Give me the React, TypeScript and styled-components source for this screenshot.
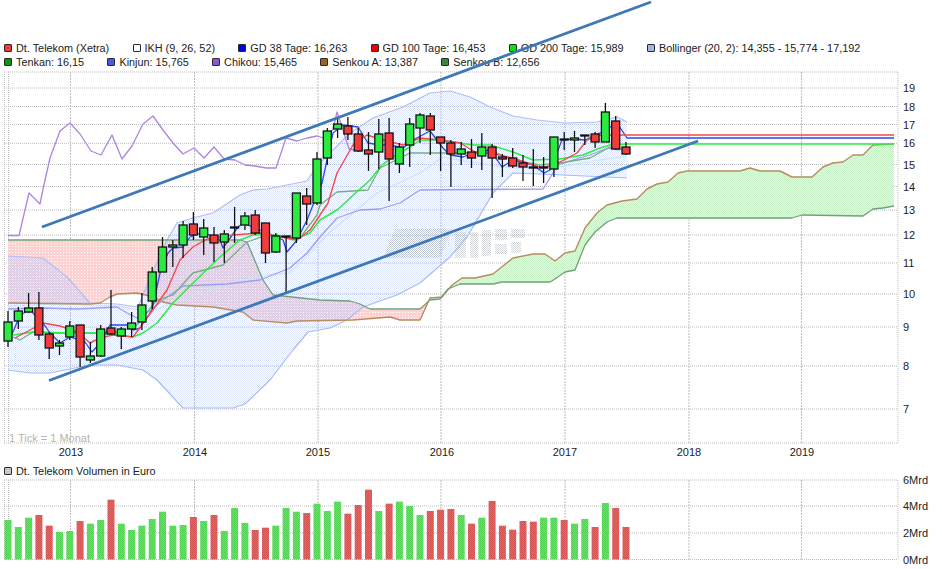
import React from "react";
import styled, { createGlobalStyle } from "styled-components";

const GlobalStyle = createGlobalStyle`
  html, body { margin: 0; padding: 0; background: #fff; }
  body { font-family: "Liberation Sans", Arial, sans-serif; color: #222; }
`;

const Page = styled.div`
  width: 942px;
  height: 569px;
  overflow: hidden;
  background: #fff;
  display: flex;
  flex-direction: column;
`;
const Legend = styled.div`
  display: flex;
  flex-direction: column;
  padding: 41px 0 0 4px;
  height: 29px;
  flex: none;
`;
const LegendRow = styled.div`
  display: flex;
  gap: 23.3px;
  height: 14px;
  align-items: center;
`;
const LegendItem = styled.div`
  display: flex;
  align-items: center;
  gap: 4px;
  font-size: 10.85px;
  line-height: 14px;
  white-space: nowrap;
`;
const Swatch = styled.span<{ $color: string }>`
  width: 6px;
  height: 6px;
  flex: none;
  border: 1px solid #2a2a2a;
  border-radius: 1px;
  background: ${(p) => p.$color};
`;
const MainChart = styled.svg`
  display: block;
  position: relative;
  flex: none;
  overflow: visible;
  width: 942px;
  height: 390px;
`;
const Caption = styled.div`
  display: flex;
  padding: 4px 0 0 4px;
  height: 14px;
  flex: none;
`;
const VolumeChart = styled.svg`
  display: block;
  flex: none;
  overflow: visible;
  width: 942px;
  height: 91px;
`;
const AxisText = styled.text`
  font-family: "Liberation Sans", Arial, sans-serif;
  font-size: 11px;
  fill: #222;
`;
const TickNote = styled.text`
  font-family: "Liberation Sans", Arial, sans-serif;
  font-size: 11px;
  fill: #b4b4ac;
`;

type P = [number, number];
const pts = (a: P[]) => a.map((p) => p.join(",")).join(" ");

const GRID_X = [70.5, 194.5, 318, 441, 565, 689, 801.5];
const PRICE_Y: [string, number][] = [
  ["19", 88], ["18", 106.5], ["17", 124.5], ["16", 143.3], ["15", 164.5], ["14", 186.5],
  ["13", 210], ["12", 235], ["11", 263], ["10", 294], ["9", 327], ["8", 366], ["7", 409],
];

// [body top, body bottom, wick top, wick bottom, colour]
const CANDLES: [number, number, number, number, "g" | "r"][] = [
  [322, 341, 311, 347, "g"], [311, 321, 307, 329, "g"], [308, 312, 293, 313, "g"], [308, 335, 292, 340, "r"],
  [334, 348, 332, 359, "r"], [343, 346, 340, 355, "g"], [326, 337, 321, 340, "g"], [325, 357, 325, 367, "r"],
  [356, 360, 342, 363, "g"], [329, 356, 325, 357, "g"], [328, 334, 290, 335, "r"], [329, 336, 327, 349, "g"],
  [323, 329, 312, 337, "g"], [305, 322, 293, 330, "g"], [272, 301, 267, 309, "g"], [247, 272, 237, 272, "g"],
  [245, 247, 240, 267, "g"], [225, 245, 221, 258, "g"], [224, 235, 212, 240, "r"], [228, 237, 219, 255, "g"],
  [235, 243, 227, 262, "r"], [234, 242, 230, 263, "g"], [227, 228, 207, 243, "g"], [216, 225, 212, 230, "g"],
  [215, 233, 210, 235, "r"], [223, 253, 223, 263, "r"], [236, 252, 233, 253, "g"], [236, 237, 236, 292, "g"],
  [193, 238, 193, 243, "g"], [196, 204, 188, 225, "r"], [159, 203, 152, 205, "g"], [131, 158, 128, 165, "g"],
  [124, 129, 118, 138, "g"], [126, 134, 117, 140, "r"], [134, 151, 128, 152, "r"], [150, 154, 132, 171, "r"],
  [134, 152, 119, 169, "g"], [133, 159, 118, 201, "r"], [147, 164, 143, 173, "g"], [124, 145, 118, 167, "g"],
  [115, 128, 113, 143, "g"], [116, 130, 113, 155, "r"], [137, 143, 137, 171, "r"], [143, 154, 140, 187, "r"],
  [149, 154, 142, 165, "g"], [152, 158, 139, 168, "r"], [147, 156, 133, 170, "g"], [147, 158, 144, 198, "r"],
  [157, 159, 154, 177, "r"], [158, 166, 148, 168, "r"], [163, 167, 155, 181, "r"], [167, 168, 149, 186, "r"],
  [167, 168, 157, 183, "r"], [137, 169, 137, 177, "g"], [139, 140, 132, 150, "r"], [138, 140, 131, 152, "g"],
  [135, 136, 135, 145, "r"], [134, 142, 132, 148, "r"], [112, 142, 103, 142, "g"], [121, 149, 116, 150, "r"],
  [147, 154, 142, 155, "r"],
];
const candleX = (i: number) => 8 + i * 10.3;

// [zoom-read top, colour]; converted to pixels below
const VOLUMES: [number, "g" | "r"][] = [
  [420, "g"], [441, "g"], [413, "g"], [405, "r"], [437, "r"], [456, "g"], [453, "g"], [423, "r"], [431, "g"], [420, "g"],
  [359, "r"], [431, "g"], [450, "g"], [437, "g"], [417, "g"], [395, "g"], [437, "g"], [435, "g"], [411, "r"], [423, "g"],
  [405, "r"], [453, "g"], [384, "g"], [429, "g"], [450, "r"], [443, "r"], [437, "g"], [384, "g"], [395, "g"], [399, "r"],
  [371, "g"], [393, "g"], [365, "g"], [401, "r"], [375, "r"], [329, "r"], [393, "g"], [371, "r"], [365, "g"], [378, "g"],
  [405, "g"], [393, "r"], [389, "r"], [387, "r"], [405, "g"], [431, "r"], [413, "g"], [363, "r"], [437, "r"], [449, "r"],
  [423, "r"], [425, "r"], [413, "g"], [413, "g"], [420, "r"], [431, "g"], [417, "g"], [441, "r"], [369, "g"], [384, "r"],
  [441, "r"],
];

const CHIKOU: P[] = [
  [8, 235.5], [19, 235.5], [29, 193], [40, 204], [43, 189], [50, 158], [60, 131], [70, 123], [80, 134], [91, 151], [101, 155],
  [112, 135], [122, 159], [132, 146], [143, 124], [153, 116], [163, 130], [173, 143], [183, 154], [194, 148], [204, 158],
  [214, 147], [224, 159], [235, 160], [245, 165], [255, 166], [266, 168], [276, 168], [286, 138], [297, 141], [307, 138],
  [317, 136], [327, 139], [333, 129], [337, 112], [343, 130], [349, 149], [362, 151],
];
const BOLL_UP: P[] = [
  [8, 256], [43, 258], [67, 277], [90, 303], [117, 304], [138, 307], [147, 285], [157, 262], [167, 240], [177, 223], [193, 218],
  [213, 213], [240, 195], [253, 190], [267, 189], [307, 181], [317, 166], [333, 150], [350, 133], [373, 118], [403, 107],
  [430, 93], [450, 91], [470, 97], [490, 107], [513, 116], [537, 120], [565, 123], [597, 122], [617, 117], [627, 122],
];
const BOLL_LOW: P[] = [
  [8, 370], [30, 373], [50, 373], [90, 365], [117, 365], [143, 370], [157, 380], [183, 408], [233, 408], [245, 404], [270, 380],
  [293, 350], [308, 332], [330, 328], [347, 320], [363, 307], [397, 295], [420, 283], [450, 257], [467, 237], [483, 210],
  [493, 193], [513, 173], [563, 175], [627, 178],
];
const BOLL_MID: P[] = [
  [8, 306], [60, 304], [117, 306], [150, 312], [180, 300], [233, 282], [267, 275], [290, 273], [313, 250], [330, 232], [377, 193],
  [420, 173], [443, 157], [470, 162], [513, 168], [553, 168], [600, 160], [627, 156],
];
const KINJUN: P[] = [
  [8, 309], [43, 308], [77, 309], [117, 307], [127, 313], [137, 318], [150, 311], [163, 300], [183, 286], [227, 284], [260, 280],
  [290, 268], [307, 253], [320, 237], [337, 218], [360, 210], [380, 209], [400, 203], [420, 190], [543, 189], [558, 165], [573, 160],
  [590, 155], [608, 148], [620, 150],
];
const TENKAN: P[] = [
  [13, 337], [20, 340], [33, 332], [60, 333], [90, 333], [120, 332], [137, 325], [157, 300], [173, 295], [193, 273], [223, 265],
  [247, 242], [267, 235], [283, 237], [300, 238], [317, 215], [320, 205], [337, 192], [368, 190], [380, 168], [390, 163], [410, 153],
  [440, 153], [473, 153], [490, 150], [513, 160], [540, 165], [560, 163], [590, 158], [610, 147], [627, 150],
];
const SENKOU_A: P[] = [
  [8, 303], [90, 304], [100, 303], [110, 297], [117, 294], [137, 293], [150, 296], [163, 302], [177, 305], [213, 307], [243, 312],
  [253, 320], [287, 323], [297, 321], [353, 320], [390, 317], [400, 320], [420, 320], [430, 298], [442, 297], [452, 285], [462, 278],
  [475, 278], [493, 274], [513, 258], [533, 254], [545, 254], [555, 261], [565, 253], [575, 251], [585, 228], [597, 213], [607, 205],
  [622, 201], [637, 199], [647, 189], [657, 184], [668, 182], [678, 173], [687, 171], [740, 171], [750, 168], [760, 171], [780, 171],
  [792, 177], [812, 177], [823, 167], [833, 163], [843, 162], [853, 155], [863, 155], [873, 145], [894, 144],
];
const SENKOU_B: P[] = [
  [8, 240], [240, 240], [247, 242], [263, 280], [273, 295], [320, 300], [350, 301], [360, 304], [370, 309], [420, 309], [430, 300],
  [440, 299], [448, 289], [460, 284], [493, 284], [502, 282], [550, 282], [555, 279], [565, 272], [575, 270], [585, 245], [595, 232],
  [607, 222], [617, 218], [792, 218], [802, 215], [863, 216], [873, 209], [883, 208], [894, 206],
];
const GD38: P[] = [
  [8, 340], [13, 332], [20, 315], [30, 310], [43, 323], [50, 333], [60, 343], [70, 337], [85, 342], [92, 352], [100, 343], [110, 325],
  [127, 325], [133, 330], [140, 328], [152, 310], [160, 273], [168, 253], [173, 248], [183, 247], [190, 237], [203, 232], [220, 240],
  [223, 248], [238, 227], [243, 223], [267, 233], [283, 240], [287, 252], [297, 240], [307, 220], [315, 200], [322, 183], [333, 133],
  [343, 125], [358, 127], [368, 143], [380, 145], [390, 145], [403, 148], [413, 140], [430, 131], [443, 148], [450, 155], [463, 157],
  [473, 153], [490, 150], [502, 167], [513, 160], [533, 165], [544, 173], [550, 170], [562, 140], [573, 139], [585, 140], [602, 132],
  [617, 123], [627, 138], [894, 138],
];
const GD100: P[] = [
  [15, 338], [43, 323], [60, 326], [77, 332], [90, 343], [100, 338], [113, 335], [133, 337], [147, 318], [167, 290], [180, 260],
  [193, 247], [207, 239], [233, 235], [260, 233], [297, 240], [310, 230], [328, 203], [337, 173], [353, 145], [367, 135], [383, 140],
  [403, 145], [420, 138], [440, 140], [460, 143], [477, 153], [490, 153], [513, 158], [533, 165], [543, 168], [560, 162], [577, 153],
  [587, 140], [600, 135], [894, 135],
];
const GD200: P[] = [
  [13, 335], [33, 332], [67, 333], [93, 333], [120, 335], [133, 337], [143, 333], [157, 323], [173, 303], [193, 283], [220, 257],
  [240, 240], [253, 235], [277, 235], [293, 240], [310, 233], [320, 220], [337, 210], [370, 180], [382, 165], [393, 157], [410, 147],
  [420, 140], [440, 140], [473, 145], [490, 145], [513, 152], [533, 160], [560, 159], [583, 155], [600, 148], [610, 145], [627, 144],
  [894, 144],
];

const PINK_END = 429;
const at = (a: P[], x: number) => {
  for (let i = 1; i < a.length; i++) {
    if (x <= a[i][0]) {
      const t = (x - a[i - 1][0]) / (a[i][0] - a[i - 1][0]);
      return a[i - 1][1] + t * (a[i][1] - a[i - 1][1]);
    }
  }
  return a[a.length - 1][1];
};
const slice = (a: P[], from: number, to: number): P[] => [
  [from, at(a, from)],
  ...a.filter((p) => p[0] > from && p[0] < to),
  [to, at(a, to)],
];
const cloud = (from: number, to: number) =>
  pts([...slice(SENKOU_A, from, to), ...slice(SENKOU_B, from, to).reverse()]);

const Line = ({ d, color, w = 1.2 }: { d: P[]; color: string; w?: number }) => (
  <polyline points={pts(d)} fill="none" stroke={color} strokeWidth={w} strokeLinejoin="round" />
);

const Grid = ({ top, bottom, rows }: { top: number; bottom: number; rows: number[] }) => (
  <g stroke="#bdbdbd" strokeWidth={1} fill="none">
    {[top, bottom, ...rows].map((y) => (
      <line key={y} x1={4} x2={898} y1={y} y2={y} strokeDasharray="1 1" />
    ))}
    {[4.5, 8.5, 898].map((x) => (
      <line key={x} x1={x} x2={x} y1={top} y2={bottom} strokeDasharray="1 1" />
    ))}
    {GRID_X.map((x) => (
      <line key={x} x1={x} x2={x} y1={top} y2={bottom} strokeDasharray="2 1" />
    ))}
  </g>
);

const Dither = ({ id, base, dot, size = 2 }: { id: string; base?: string; dot: string; size?: number }) => (
  <pattern id={id} width={size} height={size} patternUnits="userSpaceOnUse">
    {base && <rect width={size} height={size} fill={base} />}
    <rect width={1} height={1} fill={dot} />
    {size === 2 && <rect x={1} y={1} width={1} height={1} fill={dot} />}
  </pattern>
);

const YEARS: [string, number][] = [
  ["2013", 71], ["2014", 195], ["2015", 318], ["2016", 442], ["2017", 565], ["2018", 689], ["2019", 802],
];

const ROW1: [string, string][] = [
  ["#f23c3c", "Dt. Telekom (Xetra)"],
  ["#ffffff", "IKH (9, 26, 52)"],
  ["#0000f0", "GD 38 Tage: 16,263"],
  ["#f00000", "GD 100 Tage: 16,453"],
  ["#00e800", "GD 200 Tage: 15,989"],
  ["#9db8e6", "Bollinger (20, 2): 14,355 - 15,774 - 17,192"],
];
const ROW2: [string, string][] = [
  ["#0a980a", "Tenkan: 16,15"],
  ["#4a58e4", "Kinjun: 15,765"],
  ["#8a58d2", "Chikou: 15,465"],
  ["#a0601e", "Senkou A: 13,387"],
  ["#3c863c", "Senkou B: 12,656"],
];

export default function App() {
  return (
    <Page>
      <GlobalStyle />
      <Legend>
        {[ROW1, ROW2].map((row, r) => (
          <LegendRow key={r}>
            {row.map(([c, t]) => (
              <LegendItem key={t}>
                <Swatch $color={c} />
                {t}
              </LegendItem>
            ))}
          </LegendRow>
        ))}
      </Legend>

      <MainChart viewBox="0 70 942 390">
        <defs>
          <Dither id="pink" base="#fed2d2" dot="#ffffff" size={3} />
          <Dither id="mint" base="#e0f8e0" dot="#c8f1c8" />
          <Dither id="boll" dot="rgba(160,182,246,0.36)" />
          <Dither id="mark" dot="rgba(150,158,165,0.42)" />
        </defs>
        <Grid top={72} bottom={443} rows={PRICE_Y.map((p) => p[1])} />

        <polygon points={cloud(8, PINK_END)} fill="url(#pink)" />
        <polygon points={cloud(PINK_END, 894)} fill="url(#mint)" />
        <polygon points={pts([...BOLL_UP, ...[...BOLL_LOW].reverse()])} fill="url(#boll)" />

        <g fill="url(#mark)">
          <polygon points="383,258 395,229 452,229 440,258" />
          <rect x={455} y={232} width={11} height={26} />
          <rect x={470} y={232} width={8} height={26} />
          <rect x={482} y={230} width={9} height={26} />
          <rect x={495} y={229} width={12} height={11} />
          <rect x={495} y={244} width={12} height={10} />
          <rect x={511} y={229} width={14} height={9} />
          <rect x={511} y={242} width={10} height={11} />
        </g>

        <Line d={BOLL_UP} color="#b4bcf4" />
        <Line d={BOLL_LOW} color="#a8bcf2" />
        <Line d={BOLL_MID} color="#c8e4fb" />
        <Line d={SENKOU_A} color="#b88c5e" w={1.4} />
        <Line d={SENKOU_B} color="#6fa276" w={1.3} />
        <Line d={KINJUN} color="#9c9ef2" w={1.3} />
        <Line d={CHIKOU} color="#ad84e0" w={1.3} />
        <Line d={TENKAN} color="#74b07c" w={1.3} />
        <Line d={GD200} color="#2cee3c" w={1.5} />
        <Line d={GD38} color="#2548f5" w={1.3} />
        <Line d={GD100} color="#f84848" w={1.4} />

        {CANDLES.map(([t, b, wt, wb, c], i) => {
          const x = candleX(i);
          return (
            <g key={i}>
              <line x1={x} x2={x} y1={wt} y2={wb} stroke="#111" strokeWidth={1.3} />
              <rect
                x={x - 4}
                y={t}
                width={8}
                height={b - t}
                fill={c === "g" ? "#2aec40" : "#f23c3c"}
                stroke="#111"
                strokeWidth={1.3}
              />
            </g>
          );
        })}

        <line x1={42} y1={227} x2={651} y2={2} stroke="#3d78b8" strokeWidth={2.8} />
        <line x1={49} y1={380.5} x2={698} y2={141} stroke="#3d78b8" strokeWidth={2.8} />

        <TickNote x={9} y={442}>1 Tick = 1 Monat</TickNote>
        {PRICE_Y.map(([t, y]) => (
          <AxisText key={t} x={903} y={y + 4}>{t}</AxisText>
        ))}
        {YEARS.map(([t, x]) => (
          <AxisText key={t} x={x} y={456} textAnchor="middle">{t}</AxisText>
        ))}
      </MainChart>

      <Caption>
        <LegendItem>
          <Swatch $color="#c8c8c8" />
          Dt. Telekom Volumen in Euro
        </LegendItem>
      </Caption>

      <VolumeChart viewBox="0 478 942 91">
        <defs>
          <Dither id="volG" base="#68e468" dot="#50d050" />
          <Dither id="volR" base="#e46868" dot="#d25252" />
        </defs>
        <Grid top={480} bottom={559.5} rows={[506, 533]} />
        {VOLUMES.map(([z, c], i) => {
          const top = 380 + z / 3;
          return (
            <rect
              key={i}
              x={candleX(i) - 3.5}
              y={top}
              width={7}
              height={559.5 - top}
              fill={c === "g" ? "url(#volG)" : "url(#volR)"}
            />
          );
        })}
        {[["6Mrd", 480], ["4Mrd", 506], ["2Mrd", 533], ["0Mrd", 559.5]].map(([t, y]) => (
          <AxisText key={t as string} x={903} y={(y as number) + 4}>{t}</AxisText>
        ))}
      </VolumeChart>
    </Page>
  );
}
